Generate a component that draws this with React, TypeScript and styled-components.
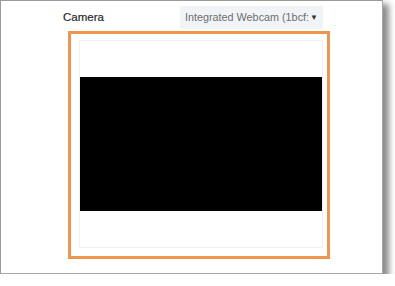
import React from 'react';
import styled, { createGlobalStyle } from 'styled-components';

const GlobalStyle = createGlobalStyle`
  html, body {
    margin: 0;
    padding: 0;
    background: #ffffff;
  }
  body {
    font-family: 'Liberation Sans', Arial, sans-serif;
  }
`;

const Card = styled.div`
  box-sizing: border-box;
  width: 383px;
  height: 274px;
  background: #ffffff;
  border-top: 1px solid #9a9a9a;
  border-left: 1px solid #9a9a9a;
  border-right: 1px solid #a8a8a8;
  border-bottom: 1px solid #a8a8a8;
  box-shadow: 5px 5px 6px 1px rgba(0, 0, 0, 0.45);
  display: flex;
  flex-direction: column;
`;

const Row = styled.div`
  display: flex;
  align-items: center;
  height: 24px;
  margin-top: 4px;
  padding-left: 62px;
`;

const Label = styled.span`
  width: 117px;
  font-size: 11.5px;
  color: #2a2a2a;
  -webkit-text-stroke: 0.2px #2a2a2a;
`;

const Select = styled.div`
  box-sizing: border-box;
  width: 143px;
  height: 23px;
  background: #f1f4f7;
  border-radius: 2px;
  display: flex;
  align-items: center;
  padding: 0 5px 0 5px;
  font-size: 10.8px;
  color: #6e6e6e;
  white-space: nowrap;
`;

const SelectText = styled.span`
  flex: 1;
  min-width: 0;
  overflow: hidden;
`;

const Arrow = styled.span`
  flex: none;
  font-size: 8px;
  color: #333;
  margin-left: 1px;
`;

const Frame = styled.div`
  box-sizing: border-box;
  margin-top: 2px;
  margin-left: 67px;
  width: 262px;
  height: 228px;
  border: 3px solid #ee9650;
  padding: 6px 4px 8px 8px;
`;

const Panel = styled.div`
  box-sizing: border-box;
  height: 100%;
  border: 1px solid #edf0f4;
  display: flex;
  flex-direction: column;
  padding-top: 36px;
`;

const Video = styled.div`
  height: 134px;
  background: #000000;
`;

export default function App() {
  return (
    <>
      <GlobalStyle />
      <Card>
        <Row>
          <Label>Camera</Label>
          <Select>
            <SelectText>Integrated Webcam (1bcf:</SelectText>
            <Arrow>▼</Arrow>
          </Select>
        </Row>
        <Frame>
          <Panel>
            <Video />
          </Panel>
        </Frame>
      </Card>
    </>
  );
}
